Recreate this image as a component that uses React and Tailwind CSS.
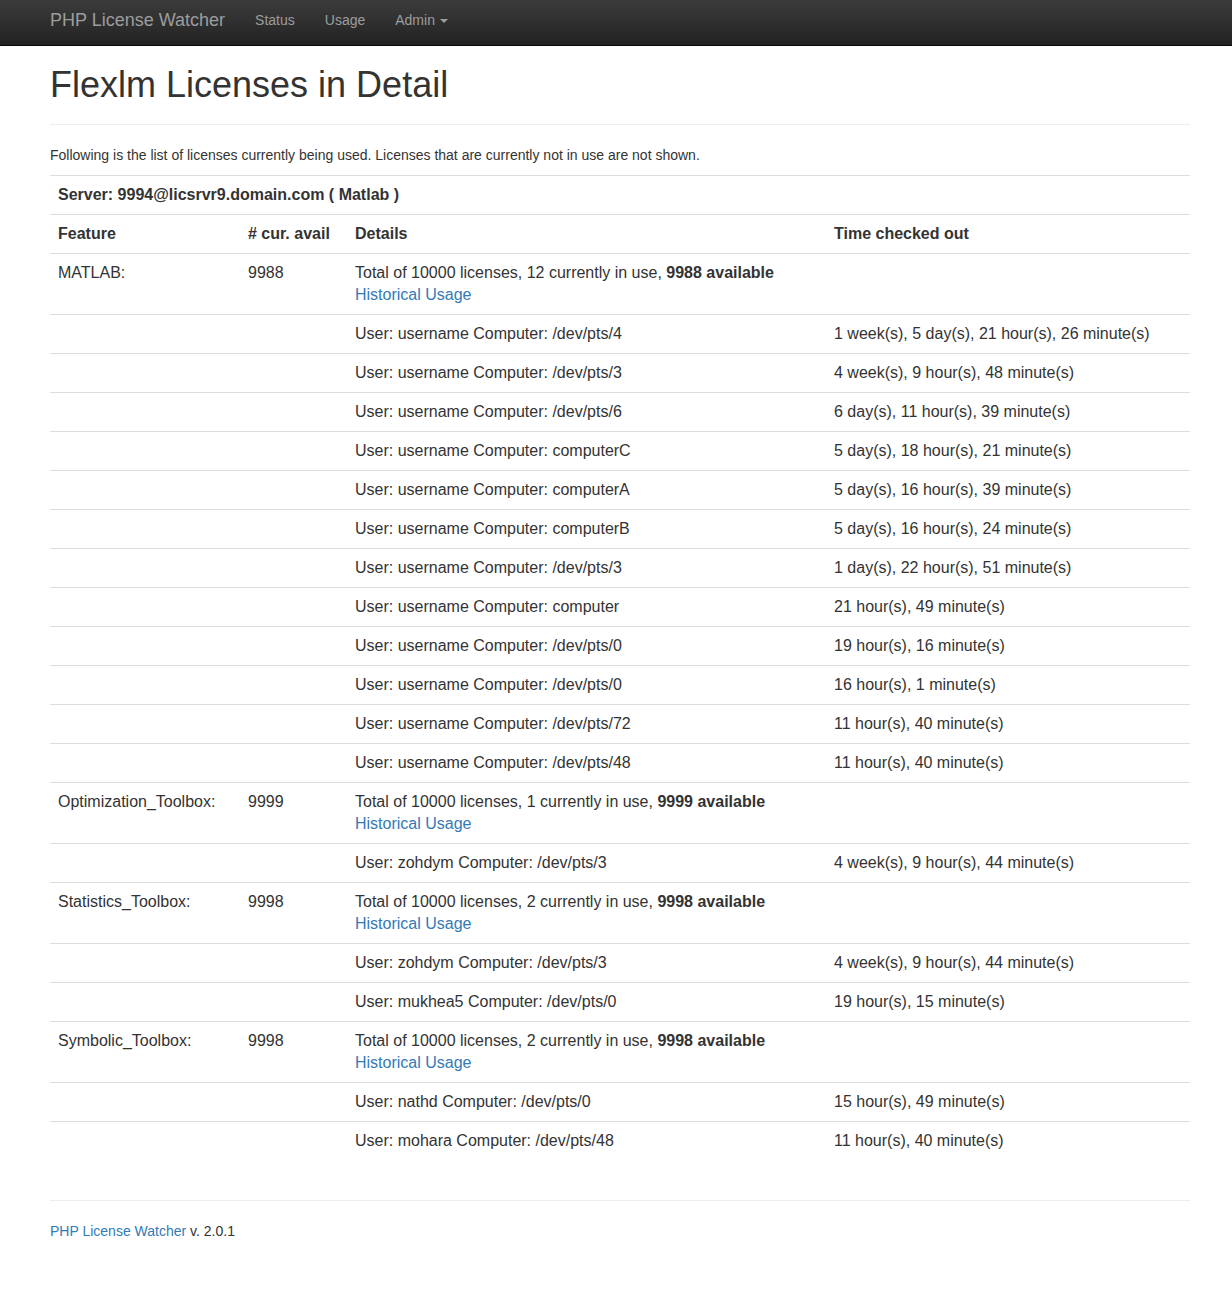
import React from "react";

const features = [
  {
    name: "MATLAB:",
    avail: "9988",
    total: "10000",
    inUse: "12",
    users: [
      ["username", "/dev/pts/4", "1 week(s), 5 day(s), 21 hour(s), 26 minute(s)"],
      ["username", "/dev/pts/3", "4 week(s), 9 hour(s), 48 minute(s)"],
      ["username", "/dev/pts/6", "6 day(s), 11 hour(s), 39 minute(s)"],
      ["username", "computerC", "5 day(s), 18 hour(s), 21 minute(s)"],
      ["username", "computerA", "5 day(s), 16 hour(s), 39 minute(s)"],
      ["username", "computerB", "5 day(s), 16 hour(s), 24 minute(s)"],
      ["username", "/dev/pts/3", "1 day(s), 22 hour(s), 51 minute(s)"],
      ["username", "computer", "21 hour(s), 49 minute(s)"],
      ["username", "/dev/pts/0", "19 hour(s), 16 minute(s)"],
      ["username", "/dev/pts/0", "16 hour(s), 1 minute(s)"],
      ["username", "/dev/pts/72", "11 hour(s), 40 minute(s)"],
      ["username", "/dev/pts/48", "11 hour(s), 40 minute(s)"],
    ],
  },
  {
    name: "Optimization_Toolbox:",
    avail: "9999",
    total: "10000",
    inUse: "1",
    users: [["zohdym", "/dev/pts/3", "4 week(s), 9 hour(s), 44 minute(s)"]],
  },
  {
    name: "Statistics_Toolbox:",
    avail: "9998",
    total: "10000",
    inUse: "2",
    users: [
      ["zohdym", "/dev/pts/3", "4 week(s), 9 hour(s), 44 minute(s)"],
      ["mukhea5", "/dev/pts/0", "19 hour(s), 15 minute(s)"],
    ],
  },
  {
    name: "Symbolic_Toolbox:",
    avail: "9998",
    total: "10000",
    inUse: "2",
    users: [
      ["nathd", "/dev/pts/0", "15 hour(s), 49 minute(s)"],
      ["mohara", "/dev/pts/48", "11 hour(s), 40 minute(s)"],
    ],
  },
];

const td = "px-2 py-2 border-t border-[#ddd] align-top";
const th = "px-2 py-2 border-t border-[#ddd] text-left font-bold";

export default function App() {
  return (
    <div className="min-h-screen bg-white text-[#333] text-[14px] leading-[20px] font-['Liberation_Sans',Arial,sans-serif]">
      {/* Navbar */}
      <nav className="h-[46px] bg-gradient-to-b from-[#3c3c3c] to-[#222] border-b border-[#080808]">
        <div className="w-[1140px] ml-[50px] flex items-center h-[40px]">
          <a className="text-[18px] text-[#9d9d9d] pr-[15px]">PHP License Watcher</a>
          <a className="text-[#9d9d9d] px-[15px]">Status</a>
          <a className="text-[#9d9d9d] px-[15px]">Usage</a>
          <a className="text-[#9d9d9d] px-[15px] flex items-center">
            Admin
            <span className="ml-[5px] mt-[1px] w-0 h-0 border-x-[4px] border-x-transparent border-t-[4px] border-t-[#9d9d9d]" />
          </a>
        </div>
      </nav>

      <div className="w-[1140px] ml-[50px]">
        {/* Header */}
        <div className="mt-[19px] mb-[20px] pb-[9px] border-b border-[#eee]">
          <h1 className="text-[36px] leading-[1.1] font-medium mb-[10px]">Flexlm Licenses in Detail</h1>
        </div>

        <p className="mb-[10px]">
          Following is the list of licenses currently being used. Licenses that are currently not in use are not shown.
        </p>

        <table className="w-full table-fixed border-collapse text-[16px] leading-[22px]">
          <colgroup>
            <col className="w-[190px]" />
            <col className="w-[107px]" />
            <col className="w-[479px]" />
            <col />
          </colgroup>
          <thead>
            <tr>
              <th colSpan={4} className={th}>
                Server: 9994@licsrvr9.domain.com ( Matlab )
              </th>
            </tr>
            <tr>
              <th className={th}>Feature</th>
              <th className={th}># cur. avail</th>
              <th className={th}>Details</th>
              <th className={th}>Time checked out</th>
            </tr>
          </thead>
          <tbody>
            {features.map((f) => (
              <React.Fragment key={f.name}>
                <tr>
                  <td className={td}>{f.name}</td>
                  <td className={td}>{f.avail}</td>
                  <td className={td}>
                    Total of {f.total} licenses, {f.inUse} currently in use, <b>{f.avail} available</b>
                    <br />
                    <a className="text-[#337ab7]">Historical Usage</a>
                  </td>
                  <td className={td}></td>
                </tr>
                {f.users.map((u, i) => (
                  <tr key={i}>
                    <td className={td}></td>
                    <td className={td}></td>
                    <td className={td}>
                      User: {u[0]} Computer: {u[1]}
                    </td>
                    <td className={td}>{u[2]}</td>
                  </tr>
                ))}
              </React.Fragment>
            ))}
          </tbody>
        </table>

        {/* Footer */}
        <hr className="mt-[40px] mb-[20px] border-0 border-t border-[#eee]" />
        <p className="pb-[40px]">
          <a className="text-[#337ab7]">PHP License Watcher</a> v. 2.0.1
        </p>
      </div>
    </div>
  );
}
